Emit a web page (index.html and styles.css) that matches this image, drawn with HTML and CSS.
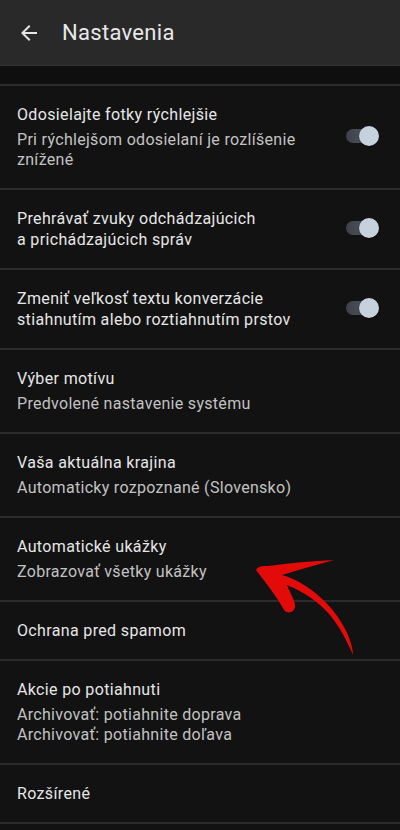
FILE: index.html
```html
<!DOCTYPE html>
<html lang="sk">
<head>
    <meta charset="UTF-8">
    <title>Nastavenia</title>
    <link rel="stylesheet" href="styles.css">
</head>
<body>
<div class="app">
    <header class="topbar">
        <svg class="back" viewBox="0 0 24 24" width="24" height="24"><path d="M20 11H7.83l5.59-5.59L12 4l-8 8 8 8 1.41-1.41L7.83 13H20v-2z" fill="#e6e6e6"/></svg>
        <h1 class="title">Nastavenia</h1>
    </header>
    <div class="band"></div>
    <ul class="settings">
        <li class="item">
            <div class="text">
                <div class="label">Odosielajte fotky rýchlejšie</div>
                <div class="sub">Pri rýchlejšom odosielaní je rozlíšenie<br>znížené</div>
            </div>
            <span class="switch"><i class="track"></i><i class="knob"></i></span>
        </li>
        <li class="item">
            <div class="text">
                <div class="label">Prehrávať zvuky odchádzajúcich<br>a prichádzajúcich správ</div>
            </div>
            <span class="switch"><i class="track"></i><i class="knob"></i></span>
        </li>
        <li class="item">
            <div class="text">
                <div class="label">Zmeniť veľkosť textu konverzácie<br>stiahnutím alebo roztiahnutím prstov</div>
            </div>
            <span class="switch"><i class="track"></i><i class="knob"></i></span>
        </li>
        <li class="item">
            <div class="text">
                <div class="label">Výber motívu</div>
                <div class="sub">Predvolené nastavenie systému</div>
            </div>
        </li>
        <li class="item">
            <div class="text">
                <div class="label">Vaša aktuálna krajina</div>
                <div class="sub">Automaticky rozpoznané (Slovensko)</div>
            </div>
        </li>
        <li class="item">
            <div class="text">
                <div class="label">Automatické ukážky</div>
                <div class="sub">Zobrazovať všetky ukážky</div>
            </div>
        </li>
        <li class="item">
            <div class="text">
                <div class="label">Ochrana pred spamom</div>
            </div>
        </li>
        <li class="item">
            <div class="text">
                <div class="label">Akcie po potiahnuti</div>
                <div class="sub">Archivovať: potiahnite doprava<br>Archivovať: potiahnite doľava</div>
            </div>
        </li>
        <li class="item">
            <div class="text">
                <div class="label">Rozšírené</div>
            </div>
        </li>
    </ul>
    <!-- červená šípka nakreslená cez obsah -->
    <svg class="annot" viewBox="0 0 110 100" width="110" height="100">
        <path d="M6,15 C8,11 12,11 18,11 C40,8 62,6 84,5 C66,10 48,15 32,20 C58,27 86,52 98,80 C101,88 103,94 103,100 C98,88 90,72 80,60 C68,46 52,36 37,30 C40,38 46,47 45,52 C44,58 37,59 34,55 C27,42 16,28 6,15 Z" fill="#e30a0a"/>
    </svg>
</div>
</body>
</html>
```

FILE: styles.css
```css
*{margin: 0;padding: 0;list-style: none;box-sizing: border-box;}
body{background: #121212;font-family: Roboto, "Noto Sans", sans-serif;color: #e6e6e6;}
.app{position: relative;width: 400px;min-height: 830px;background: #121212;}

.topbar{height: 66px;background: #292929;display: flex;align-items: center;padding-left: 17px;gap: 21px;border-bottom: 1px solid #333;}
.back{display: block;}
.title{font-size: 22px;font-weight: 400;color: #e8e8e8;letter-spacing: 0.3px;}
.band{height: 20px;background: #0f0f0f;border-bottom: 2px solid #2b2b2b;}

.settings{display: flex;flex-direction: column;}
.item{display: flex;align-items: center;padding: 18px 21px 18px 17px;border-bottom: 2px solid #2b2b2b;}
.text{flex: 1;}
.label{font-size: 16px;line-height: 21px;color: #e6e6e6;letter-spacing: 0.35px;}
.sub{font-size: 16px;line-height: 20px;color: #c2c2c2;margin-top: 5px;letter-spacing: 0.3px;}

.switch{display: flex;align-items: center;margin-top: -3px;}
.track{display: block;width: 31px;height: 14px;border-radius: 7px;background: linear-gradient(90deg, #3d4048, #5a5f6a);}
.knob{display: block;width: 20px;height: 20px;border-radius: 50%;background: #c7d0dd;margin-left: -18px;box-shadow: 0 1px 2px rgba(0,0,0,0.5);}

.annot{position: absolute;left: 250px;top: 555px;}
```
